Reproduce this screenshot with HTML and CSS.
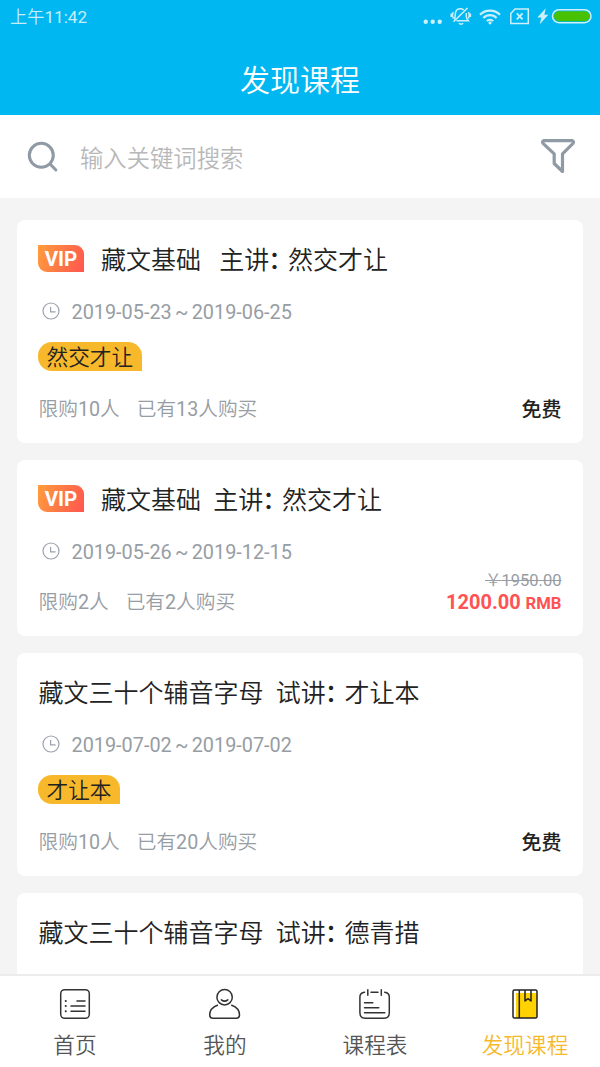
FILE: index.html
```html
<!DOCTYPE html>
<html lang="zh-CN">
<head>
<meta charset="utf-8">
<title>发现课程</title>
<link rel="stylesheet" href="styles.css">
</head>
<body>
<svg class="defs" width="0" height="0">
  <symbol id="clock" viewBox="0 0 18 18"><g fill="none" stroke="#9aa2ab" stroke-width="1.2"><circle cx="9" cy="9" r="8"/><path d="M8.6 5v4.8h5"/></g></symbol>
</svg>
<div class="app">
  <header class="header">
    <div class="status">
      <span class="time">上午<span class="num">11:42</span></span>
      <svg class="status-icons" width="180" height="24" viewBox="0 0 180 24" fill="none" stroke="#ccf0fc" stroke-width="1.5">
        <g fill="#ccf0fc" stroke="none"><circle cx="5.700" cy="16.700" r="2.200"/><circle cx="12.700" cy="16.700" r="2.200"/><circle cx="19.700" cy="16.700" r="2.200"/></g>
        <path d="M34.200 14.500c1.200-1.500 1-3.500 1.100-5.500.2-3 2-5.200 5.200-5.200 1.300 0 2.300.4 3.200 1.100M46.300 8v3.500c0 1.700.5 2.700 2 4.200H36.500M39 18.200c.8 1.400 3.200 1.400 4 0M33.500 16.700 47.500 3M33.200 7c-1 2-1 4.500 0 6.500M31.200 8.500v3.500M48.500 7c1 2 1 4.500 0 6.500M50.400 8.500v3.500"/>
        <g transform="translate(6 .3)">
          <g stroke-width="2.200"><path d="M54 9.400c5.300-5.500 14.700-5.500 20 0M57.400 12.600c3.600-3.700 9.600-3.700 13.200 0M60.800 15.700c1.800-1.700 4.600-1.700 6.400 0"/></g><circle cx="64" cy="17.500" r="1.600" fill="#ccf0fc" stroke="none"/>
          <path stroke-width="1.500" d="M89 3.800h13.300v14.400H84.800V8.200z"/><path stroke-width="1.800" d="m90.800 8 5.800 6m0-6-5.800 6"/>
          <path d="m118.500 3-8.500 9.200h4L112.500 19l8.500-9.500h-4z" transform="translate(1.300)" fill="#ccf0fc" stroke="none"/>
          <rect x="126.500" y="4.400" width="38.500" height="13" rx="6.500"/><rect x="128" y="5.900" width="35.500" height="10" rx="5" fill="#48c200" stroke="none"/>
        </g>
      </svg>
    </div>
    <h1 class="page-title">发现课程</h1>
  </header>

  <div class="search">
    <svg class="search-icon" width="32" height="32" viewBox="0 0 32 32" fill="none" stroke="#909aa4" stroke-width="3" stroke-linecap="round"><circle cx="14.300" cy="14.300" r="12"/><path d="m23.300 23.300 5.600 5.700"/></svg>
    <span class="placeholder">输入关键词搜索</span>
    <svg class="filter-icon" width="36" height="36" viewBox="0 0 36 36" fill="none" stroke="#909aa4" stroke-width="3.200" stroke-linejoin="round"><path d="M3.600 2.600h28.800q2 1.200.4 3L22.500 15.800V33.500l-8.300-8V15.800L3.300 5.600q-1.700-1.800.3-3z"/></svg>
  </div>

  <main class="list">
    <article class="card">
      <h2 class="title"><span class="vip">VIP</span><span>藏文基础   主讲<span class="colon">：</span>然交才让</span></h2>
      <div class="date"><svg class="clock"><use href="#clock"/></svg>2019-05-23<span class="tilde">~</span>2019-06-25</div>
      <span class="tag">然交才让</span>
      <div class="foot"><span class="limit">限购<span class="num">10</span>人</span><span class="sold">已有<span class="num">13</span>人购买</span><strong class="free">免费</strong></div>
    </article>
    <article class="card">
      <h2 class="title"><span class="vip">VIP</span><span>藏文基础  主讲<span class="colon">：</span>然交才让</span></h2>
      <div class="date"><svg class="clock"><use href="#clock"/></svg>2019-05-26<span class="tilde">~</span>2019-12-15</div>
      <div class="foot foot-priced"><span class="limit">限购<span class="num">2</span>人</span><span class="sold">已有<span class="num">2</span>人购买</span>
        <div class="price"><s class="old">￥<span class="num">1950.00</span></s><strong class="now">1200.00 <small class="unit">RMB</small></strong></div>
      </div>
    </article>
    <article class="card">
      <h2 class="title"><span>藏文三十个辅音字母  试讲<span class="colon">：</span>才让本</span></h2>
      <div class="date"><svg class="clock"><use href="#clock"/></svg>2019-07-02<span class="tilde">~</span>2019-07-02</div>
      <span class="tag">才让本</span>
      <div class="foot"><span class="limit">限购<span class="num">10</span>人</span><span class="sold">已有<span class="num">20</span>人购买</span><strong class="free">免费</strong></div>
    </article>
    <article class="card card-cut">
      <h2 class="title"><span>藏文三十个辅音字母  试讲<span class="colon">：</span>德青措</span></h2>
    </article>
  </main>

  <nav class="tabs">
    <a class="tab">
      <svg width="34" height="32" viewBox="0 0 34 32" fill="none" stroke="#333" stroke-width="1.500" stroke-linecap="round"><rect x="2.700" y="1.700" width="28.600" height="28.600" rx="4"/><path d="M19 13h8M13 18h14M13 23.300h14"/><path stroke-width="2" d="M7.700 13h.1M7.700 18h.1M7.700 23.300h.1"/></svg>
      <span>首页</span>
    </a>
    <a class="tab">
      <svg width="34" height="32" viewBox="0 0 34 32" fill="none" stroke="#333" stroke-width="1.500" stroke-linecap="round"><circle cx="16.600" cy="9.200" r="7.700"/><path d="M13.400 11.800c1.800 1.500 4.600 1.500 6.400 0M9.500 17.200C4.500 19 1.700 22.500 1.700 27c0 2 1.200 3.200 3.200 3.200h23.400c2 0 3.200-1.200 3.200-3.200 0-4.500-2.800-8-7.800-9.800"/></svg>
      <span>我的</span>
    </a>
    <a class="tab">
      <svg width="34" height="32" viewBox="0 0 34 32" fill="none" stroke="#333" stroke-width="1.500" stroke-linecap="round"><path d="M6.500 4.300c-3 .4-4.600 2-4.600 4.700v15.700c0 3.700 1.900 5.600 5.600 5.600h18.200c3.700 0 5.600-1.900 5.600-5.600V9c0-2.700-1.600-4.300-4.600-4.700M13 4.300h7M9.800 1.800v5.500M23.300 1.800v5.500M6.500 14.700h8.300M6.500 19.700h14.300M6.500 24.700h20.300"/></svg>
      <span>课程表</span>
    </a>
    <a class="tab active">
      <svg width="34" height="32" viewBox="0 0 34 32" fill="none" stroke="#222" stroke-width="1.500" stroke-linejoin="round"><path fill="#ffd200" stroke="none" d="M8 5h21v25H8z"/><rect x="5" y="1.900" width="24" height="28" rx="1.500"/><path d="M11.300 2v28M17 2v11l3-2.300 3 2.300V2"/></svg>
      <span>发现课程</span>
    </a>
  </nav>
</div>
</body>
</html>
```

FILE: styles.css
```css
* { box-sizing: border-box; }
body { margin: 0; font-family: Roboto, "Noto Sans CJK SC", sans-serif; font-weight: 350; background: #f4f4f4; }
.defs { display: block; }
.num { font-weight: 400; }
.app { width: 600px; height: 1067px; display: flex; flex-direction: column; overflow: hidden; }

.header { height: 115px; flex: none; background: #00b7f1; color: #fff; }
.status { height: 40px; padding: 5px 0 0 10px; display: flex; justify-content: space-between; }
.time { font-size: 17.200px; line-height: 25px; color: #c4eefb; }
.page-title { margin: 19px 0 0; font-size: 30px; line-height: 43px; font-weight: 350; text-align: center; }

.search { height: 83px; flex: none; background: #fff; padding: 0 24px 0 27px; display: flex; align-items: center; }
.search-icon { flex: none; }
.placeholder { margin: 0 0 0 21px; flex: 1; font-size: 23.330px; color: #b8b8b8; }
.filter-icon { flex: none; margin-top: -1px; }

.list { flex: 1; min-height: 0; overflow: hidden; padding: 22px 17px 0; display: flex; flex-direction: column; gap: 17px; }
.card { flex: none; background: #fff; border-radius: 8px; padding: 22px 21.500px 19px; }
.card-cut { height: 200px; }
.title { margin: 0; height: 34px; padding-top: 4px; display: flex; align-items: center; font-size: 25px; line-height: 30px; font-weight: 350; color: #222; white-space: pre; }
.colon { margin-left: -1px; letter-spacing: -5.300px; font-weight: 500; }
.vip { width: 46px; height: 27px; margin: -5px 17px 0 -.5px; border-radius: 0 9px 0 9px; background: linear-gradient(110deg, #ff9d3c, #ff5550); color: #fff; font: bold 20.500px/29px Roboto, sans-serif; text-align: center; }
.date { margin-top: 21px; height: 30px; display: flex; align-items: center; font-size: 19.850px; font-weight: 400; color: #979da4; white-space: pre; }
.tilde { width: 20px; text-align: center; }
.clock { width: 18px; height: 18px; margin: -2px 12px 0 3px; }
.tag { display: block; width: max-content; margin: 15px 0 0 -.5px; height: 29px; padding: 0 8.500px; border-radius: 14px 14px 0 14px; background: #f7b92b; color: #222; font-size: 21.670px; line-height: 31px; }
.foot { margin-top: 4px; height: 30px; display: flex; align-items: flex-end; font-size: 19.700px; line-height: 28px; color: #979da4; }
.tag + .foot { margin-top: 23px; }
.sold { margin-left: 17px; }
.free { margin-left: auto; font-size: 20px; font-weight: 500; color: #222; }
.foot-priced { height: 46px; }
.price { margin-left: auto; display: flex; flex-direction: column; align-items: flex-end; padding-bottom: 1px; }
.old { font-size: 16.500px; line-height: 19px; }
.now { font-size: 20px; line-height: 24px; font-weight: 700; color: #ff5252; }
.unit { font-size: 16.670px; }

.tabs { height: 93px; flex: none; background: #fff; border-top: 2px solid #ececec; display: flex; }
.tab { flex: 1; display: flex; flex-direction: column; align-items: center; padding-top: 12px; font-size: 21.670px; line-height: 30px; color: #555; }
.tab span { margin-top: 11px; }
.active { color: #f7b92b; }
```
